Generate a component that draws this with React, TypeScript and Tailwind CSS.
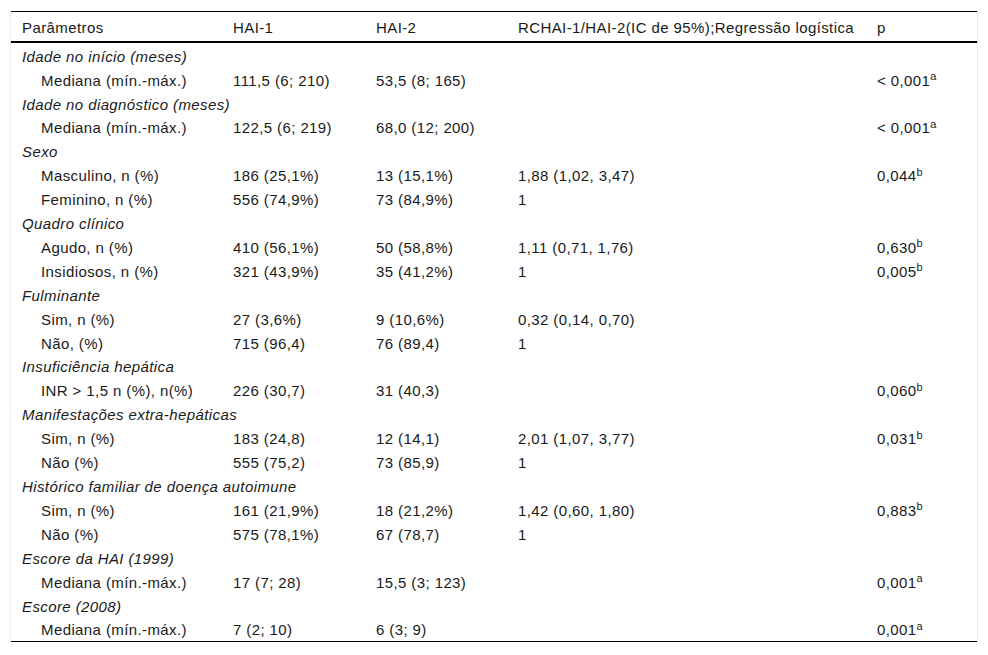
import React from "react";

type Row =
	| { group: string }
	| { label: string; hai1?: string; hai2?: string; rc?: string; p?: string; sup?: string };

const rows: Row[] = [
	{ group: "Idade no início (meses)" },
	{ label: "Mediana (mín.-máx.)", hai1: "111,5 (6; 210)", hai2: "53,5 (8; 165)", p: "< 0,001", sup: "a" },
	{ group: "Idade no diagnóstico (meses)" },
	{ label: "Mediana (mín.-máx.)", hai1: "122,5 (6; 219)", hai2: "68,0 (12; 200)", p: "< 0,001", sup: "a" },
	{ group: "Sexo" },
	{ label: "Masculino, n (%)", hai1: "186 (25,1%)", hai2: "13 (15,1%)", rc: "1,88 (1,02, 3,47)", p: "0,044", sup: "b" },
	{ label: "Feminino, n (%)", hai1: "556 (74,9%)", hai2: "73 (84,9%)", rc: "1" },
	{ group: "Quadro clínico" },
	{ label: "Agudo, n (%)", hai1: "410 (56,1%)", hai2: "50 (58,8%)", rc: "1,11 (0,71, 1,76)", p: "0,630", sup: "b" },
	{ label: "Insidiosos, n (%)", hai1: "321 (43,9%)", hai2: "35 (41,2%)", rc: "1", p: "0,005", sup: "b" },
	{ group: "Fulminante" },
	{ label: "Sim, n (%)", hai1: "27 (3,6%)", hai2: "9 (10,6%)", rc: "0,32 (0,14, 0,70)" },
	{ label: "Não, (%)", hai1: "715 (96,4)", hai2: "76 (89,4)", rc: "1" },
	{ group: "Insuficiência hepática" },
	{ label: "INR > 1,5 n (%), n(%)", hai1: "226 (30,7)", hai2: "31 (40,3)", p: "0,060", sup: "b" },
	{ group: "Manifestações extra-hepáticas" },
	{ label: "Sim, n (%)", hai1: "183 (24,8)", hai2: "12 (14,1)", rc: "2,01 (1,07, 3,77)", p: "0,031", sup: "b" },
	{ label: "Não (%)", hai1: "555 (75,2)", hai2: "73 (85,9)", rc: "1" },
	{ group: "Histórico familiar de doença autoimune" },
	{ label: "Sim, n (%)", hai1: "161 (21,9%)", hai2: "18 (21,2%)", rc: "1,42 (0,60, 1,80)", p: "0,883", sup: "b" },
	{ label: "Não (%)", hai1: "575 (78,1%)", hai2: "67 (78,7)", rc: "1" },
	{ group: "Escore da HAI (1999)" },
	{ label: "Mediana (mín.-máx.)", hai1: "17 (7; 28)", hai2: "15,5 (3; 123)", p: "0,001", sup: "a" },
	{ group: "Escore (2008)" },
	{ label: "Mediana (mín.-máx.)", hai1: "7 (2; 10)", hai2: "6 (3; 9)", p: "0,001", sup: "a" },
];

export default function App() {
	return (
		<div className="min-h-[655px] w-[988px] bg-white pt-[11px] font-['Liberation_Sans',Arial,sans-serif] text-[15px] tracking-[0.4px] text-[#1a1a1a]">
			<div className="ml-[10px] w-[968px] border-x border-[#ececec]">
				<div className="border-t border-black">
					<div className="flex h-[31px] items-center border-b-2 border-black pt-[3px]">
						<div className="w-[222px] pl-[11px]">Parâmetros</div>
						<div className="w-[143px]">HAI-1</div>
						<div className="w-[142px]">HAI-2</div>
						<div className="w-[359px]">RCHAI-1/HAI-2(IC de 95%);Regressão logística</div>
						<div className="flex-1">p</div>
					</div>
					<div className="border-b border-black">
						{rows.map((r, i) =>
							"group" in r ? (
								<div key={i} className="flex h-[23.92px] items-center pl-[11px] pt-[4px] italic">
									{r.group}
								</div>
							) : (
								<div key={i} className="flex h-[23.92px] items-center pt-[4px]">
									<div className="w-[222px] pl-[30px]">{r.label}</div>
									<div className="w-[143px]">{r.hai1}</div>
									<div className="w-[142px]">{r.hai2}</div>
									<div className="w-[359px]">{r.rc}</div>
									<div className="flex-1">
										{r.p}
										{r.sup && <sup className="text-[11px]">{r.sup}</sup>}
									</div>
								</div>
							),
						)}
					</div>
				</div>
			</div>
		</div>
	);
}
